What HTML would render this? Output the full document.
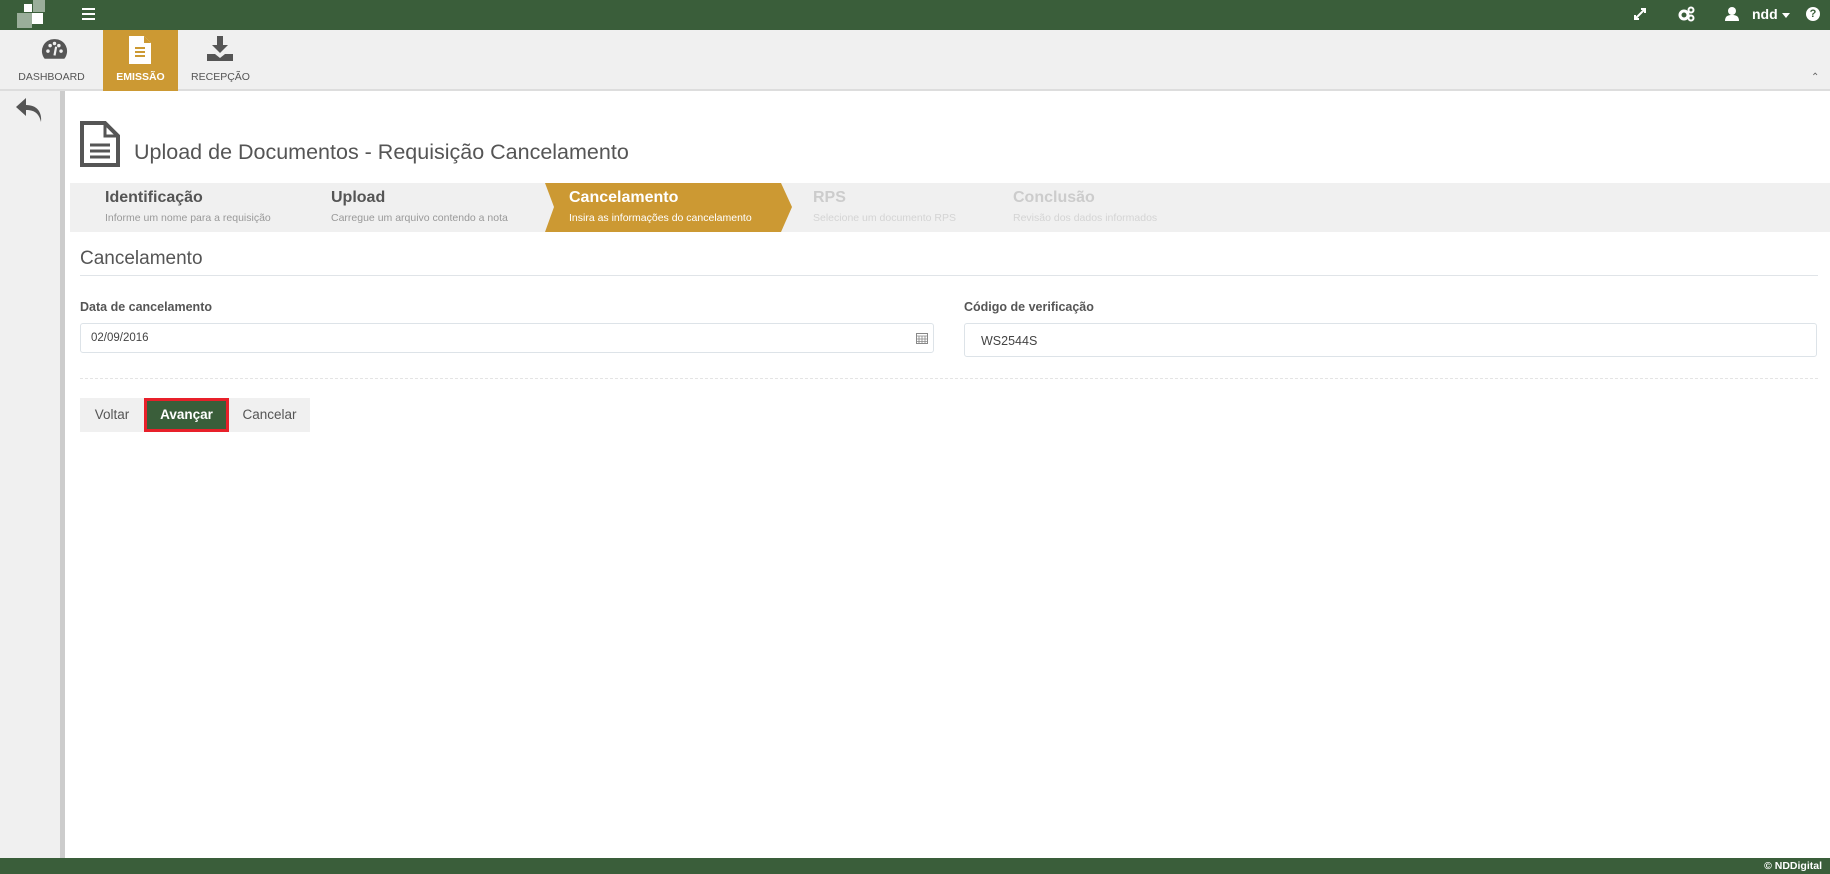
<!DOCTYPE html>
<html><head><meta charset="utf-8"><style>
*{margin:0;padding:0;box-sizing:border-box}
body{width:1830px;height:874px;position:relative;overflow:hidden;background:#fff;font-family:"Liberation Sans",sans-serif;color:#555}
.abs{position:absolute}
.top{left:0;top:0;width:1830px;height:30px;background:#3a5e3a}
.nav{left:0;top:30px;width:1830px;height:61px;background:#f0f0f0;border-bottom:2px solid #ddd}
.tab{top:30px;height:61px;text-align:center;font-size:10.5px;color:#555}
.tab span{position:absolute;left:0;right:0;top:41px}
.side{left:0;top:91px;width:60px;height:767px;background:#f0f0f0}
.sbar{left:60px;top:91px;width:5px;height:767px;background:#ccc}
.foot{left:0;top:858px;width:1830px;height:16px;background:#3a5e3a;color:#fff;font-size:10.5px;font-weight:bold;text-align:right;padding-right:8px;line-height:16px}
.steps{left:70px;top:183px;width:1760px;height:49px;background:#f0f0f0}
.st{top:189px}
.st b{display:block;font-size:16px;color:#555;font-weight:bold}
.st i{display:block;font-style:normal;font-size:10.5px;color:#999;margin-top:5px}
.input{border:1px solid #dde3e8;border-radius:3px;background:#fff;font-size:11.5px;color:#444}
.btn{top:398px;height:34px;font-size:13.5px;line-height:34px;text-align:center;background:#f0f0f0;color:#555}
</style></head><body>
<div class="abs top"></div>
<div class="abs" style="left:33px;top:0;width:12px;height:12px;background:#9aae9a"></div>
<div class="abs" style="left:24px;top:4px;width:8px;height:8px;background:#fff"></div>
<div class="abs" style="left:17px;top:13px;width:15px;height:15px;background:#9aae9a"></div>
<div class="abs" style="left:32px;top:13px;width:11px;height:11px;background:#fff"></div>
<div class="abs" style="left:82px;top:8px;width:13px;height:2px;background:#fff;box-shadow:0 5px 0 #fff,0 10px 0 #fff"></div>
<svg class="abs" style="left:1632px;top:6px" width="16" height="16" viewBox="0 0 16 16"><path d="M3 13L13 3M9 3h4v4M3 9v4h4" stroke="#fff" stroke-width="2" fill="none"/></svg>
<svg class="abs" style="left:1678px;top:5px" width="18" height="18" viewBox="0 0 18 18"><circle cx="6" cy="10" r="4" fill="none" stroke="#fff" stroke-width="3"/><circle cx="13" cy="5" r="2.5" fill="none" stroke="#fff" stroke-width="2"/><circle cx="13" cy="13" r="2.5" fill="none" stroke="#fff" stroke-width="2"/></svg>
<svg class="abs" style="left:1725px;top:6px" width="14" height="16" viewBox="0 0 14 16"><circle cx="7" cy="5" r="4" fill="#fff"/><path d="M0 15c0-5 3-6 7-6s7 1 7 6z" fill="#fff"/></svg>
<div class="abs" style="left:1752px;top:6px;color:#fff;font-size:14px;font-weight:bold">ndd</div>
<div class="abs" style="left:1782px;top:13px;border:4px solid transparent;border-top:5px solid #fff"></div>
<div class="abs" style="left:1806px;top:7px;width:14px;height:14px;border-radius:50%;background:#fff;color:#3a5e3a;font-size:11px;font-weight:bold;text-align:center;line-height:14px">?</div>

<div class="abs nav"></div>
<div class="abs tab" style="left:0;width:103px">
<svg class="abs" style="left:41px;top:8px" width="27" height="24" viewBox="0 0 24 22"><path d="M12 1A11 11 0 0 0 3 19h18A11 11 0 0 0 12 1z" fill="#555"/><circle cx="6" cy="12" r="1.6" fill="#f0f0f0"/><circle cx="8" cy="7" r="1.6" fill="#f0f0f0"/><circle cx="12" cy="5" r="1.6" fill="#f0f0f0"/><circle cx="16" cy="7" r="1.6" fill="#f0f0f0"/><circle cx="18" cy="12" r="1.6" fill="#f0f0f0"/><path d="M12 16l1.5-8" stroke="#f0f0f0" stroke-width="2"/></svg>
<span>DASHBOARD</span></div>
<div class="abs tab" style="left:103px;width:75px;background:#cc9933;color:#fff;font-weight:bold">
<svg class="abs" style="left:26px;top:6px" width="24" height="28" viewBox="0 0 24 28"><path d="M0 0h15l7 7v21H0z" fill="#fff"/><path d="M15 0v7h7" fill="#cc9933"/><path d="M6 12h10M6 16h10M6 20h10" stroke="#cc9933" stroke-width="2"/></svg>
<span>EMISSÃO</span></div>
<div class="abs tab" style="left:178px;width:85px">
<svg class="abs" style="left:29px;top:6px" width="26" height="26" viewBox="0 0 26 26"><path d="M10 0h6v9h5l-8 8-8-8h5z" fill="#555"/><path d="M0 18h8l5 4 5-4h8v7H0z" fill="#555"/></svg>
<span>RECEPÇÃO</span></div>
<div class="abs" style="left:1811px;top:72px;font-size:10px;color:#666">&#8963;</div>

<div class="abs side"></div>
<div class="abs sbar"></div>
<svg class="abs" style="left:14px;top:96px" width="32" height="28" viewBox="0 0 32 28"><path d="M12 2L2 11l10 9v-6c8 0 13 3 15 12 1-10-4-17-15-17z" fill="#555"/></svg>

<svg class="abs" style="left:79px;top:120px" width="42" height="48" viewBox="0 0 42 48"><path d="M3 3h23l13 13v29H3z" fill="none" stroke="#555" stroke-width="4"/><path d="M26 3v13h13" fill="none" stroke="#555" stroke-width="3"/><path d="M11 25h20M11 31h20M11 37h20" stroke="#555" stroke-width="3"/></svg>
<div class="abs" style="left:134px;top:140px;font-size:21.5px;color:#555">Upload de Documentos - Requisição Cancelamento</div>

<div class="abs steps"></div>
<svg class="abs" style="left:545px;top:183px" width="248" height="49"><path d="M0 0H236L247 24L236 49H0L9 24z" fill="#cc9933"/></svg>
<div class="abs st" style="left:105px"><b>Identificação</b><i>Informe um nome para a requisição</i></div>
<div class="abs st" style="left:331px"><b>Upload</b><i>Carregue um arquivo contendo a nota</i></div>
<div class="abs st" style="left:569px"><b style="color:#fff">Cancelamento</b><i style="color:#fff">Insira as informações do cancelamento</i></div>
<div class="abs st" style="left:813px"><b style="color:#ccc">RPS</b><i style="color:#d4d4d4">Selecione um documento RPS</i></div>
<div class="abs st" style="left:1013px"><b style="color:#ccc">Conclusão</b><i style="color:#d4d4d4">Revisão dos dados informados</i></div>

<div class="abs" style="left:80px;top:248px;font-size:19px;color:#555">Cancelamento</div>
<div class="abs" style="left:80px;top:275px;width:1738px;height:1px;background:#e0e4e8"></div>

<div class="abs" style="left:80px;top:300px;font-size:12.5px;font-weight:bold;color:#555">Data de cancelamento</div>
<div class="abs input" style="left:80px;top:323px;width:854px;height:30px;padding:8px 10px">02/09/2016</div>
<svg class="abs" style="left:916px;top:332px" width="12" height="12" viewBox="0 0 12 12"><rect x="0.5" y="1.5" width="11" height="10" fill="none" stroke="#888"/><path d="M0 4h12M3 4v8M6 4v8M9 4v8M0 7h12M0 9.5h12" stroke="#888" stroke-width="0.8"/></svg>
<div class="abs" style="left:964px;top:300px;font-size:12.5px;font-weight:bold;color:#555">Código de verificação</div>
<div class="abs input" style="left:964px;top:323px;width:853px;height:34px;padding:10px 16px;font-size:12.5px">WS2544S</div>

<div class="abs" style="left:80px;top:378px;width:1738px;border-top:1px dashed #e4e4e4"></div>

<div class="abs btn" style="left:80px;width:64px">Voltar</div>
<div class="abs btn" style="left:144px;width:85px;background:#3a5e3a;color:#fff;font-weight:bold;border:3px solid #e8202a;line-height:28px">Avançar</div>
<div class="abs btn" style="left:229px;width:81px">Cancelar</div>

<div class="abs foot">© NDDigital</div>
</body></html>
